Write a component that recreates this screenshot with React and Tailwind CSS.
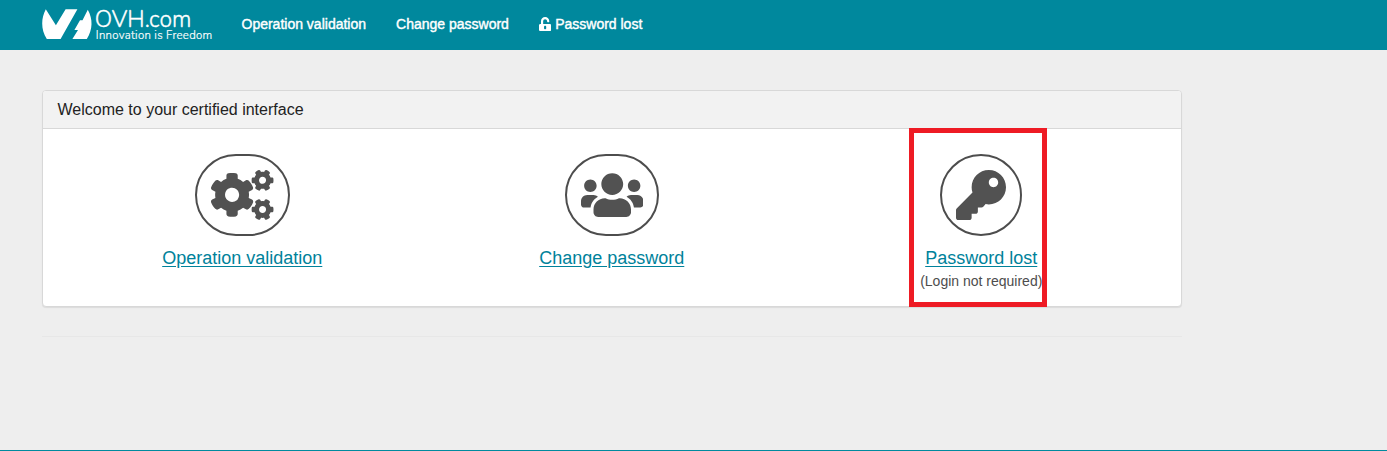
import React from "react";
import { FaCogs, FaUsers, FaKey, FaUnlockAlt } from "react-icons/fa";

function Logo() {
  return (
    <svg className="block h-[50px] w-[172px] shrink-0" viewBox="0 0 172 50" fill="#fff">
      <path d="M3.8 9.3 13.9 25.2 23.6 9.3H35.4L18.6 39H4.8C-1.2 29.8-1.1 18.6 3.8 9.3Z" />
      <path d="M45.8 9.8C51 19 50.9 29.8 44.8 39H30.4L36 30H32.4L38 20.3H40.5Z" />
      <text x="52.8" y="27.2" fontFamily="Nunito, Lato, sans-serif" fontWeight="300" fontSize="24.5" textLength="96.5" lengthAdjust="spacingAndGlyphs" stroke="#fff" strokeWidth="0.35">OVH.com</text>
      <text x="53.8" y="38.6" fontFamily="Nunito, Lato, sans-serif" fontWeight="300" fontSize="11.4" textLength="116.4" lengthAdjust="spacing" stroke="#fff" strokeWidth="0.2" style={{ fontVariantLigatures: "none" }}>Innovation is Freedom</text>
    </svg>
  );
}

function Tile({ icon: Icon, label, note, wide }) {
  return (
    <div className="flex w-[369.5px] flex-col items-center">
      <div className="rounded-full border-2 border-[#4d4d4d] p-[14px] text-[#525252]">
        <Icon className={wide ? "block h-[50px] w-[62.5px]" : "block h-[50px] w-[50px]"} />
      </div>
      <a href="#" className="mt-[9px] text-[18px] leading-[27px] text-[#00829b] underline underline-offset-2">
        {label}
      </a>
      {note && <div className="-mt-px text-[14px] leading-[21px] text-[#4d4d4d]">{note}</div>}
    </div>
  );
}

export default function App() {
  return (
    <div className="relative flex h-[451px] flex-col border-b border-[#008a9f] bg-[#eee] font-['Liberation_Sans',Arial,sans-serif]">
      <nav className="flex h-[50px] shrink-0 items-center bg-[#00889d] pl-[42px] text-[14px] text-white [-webkit-text-stroke:0.4px_white]">
        <div className="[-webkit-text-stroke:0]"><Logo /></div>
        <a href="#" className="ml-[27.5px] -mt-[2px]">Operation validation</a>
        <a href="#" className="ml-[30px] -mt-[2px]">Change password</a>
        <a href="#" className="ml-[30px] -mt-[2px] flex items-center gap-1">
          <FaUnlockAlt className="h-[14px] w-[12.25px]" />
          Password lost
        </a>
      </nav>
      <main className="ml-[42px] mt-[40px] w-[1140px]">
        <section className="h-[217px] rounded-[4px] border border-[#d8d8d8] bg-white shadow-[0_1px_1px_rgba(0,0,0,0.08)]">
          <h1 className="h-[38px] rounded-t-[3px] border-b border-[#d8d8d8] bg-[#f2f2f2] pl-[14.5px] text-[16px] leading-[37px] text-[#222]">
            Welcome to your certified interface
          </h1>
          <div className="flex px-[14.5px] pt-[25px]">
            <Tile icon={FaCogs} label="Operation validation" wide />
            <Tile icon={FaUsers} label="Change password" wide />
            <Tile icon={FaKey} label="Password lost" note="(Login not required)" />
          </div>
        </section>
        <hr className="mt-[29px] border-[#e7e7e7]" />
      </main>
      <div className="pointer-events-none absolute left-[909px] top-[128px] h-[179px] w-[138px] border-5 border-[#ee1b24]" />
    </div>
  );
}
